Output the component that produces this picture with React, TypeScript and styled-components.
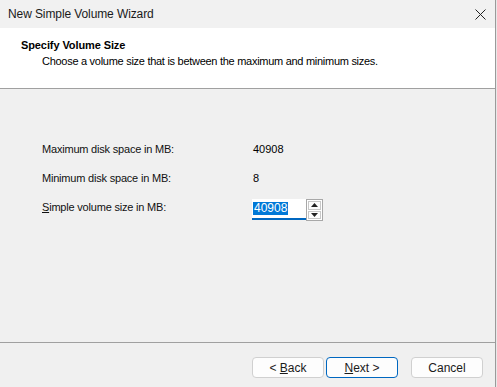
import React from "react";
import styled, { createGlobalStyle } from "styled-components";

const Global = createGlobalStyle`
  html, body { margin: 0; padding: 0; background: #f0f0f0; }
  body { font-family: "Liberation Sans", Arial, sans-serif; font-size: 11px; color: #000; }
  * { box-sizing: border-box; }
`;

const Frame = styled.div`
  display: flex;
  width: 497px;
  height: 387px;
  overflow: hidden;
`;

const Window = styled.div`
  width: 496px;
  height: 387px;
  display: flex;
  flex-direction: column;
  background: #f0f0f0;
  border-right: 1px solid #9a9a9a;
`;

const Edge = styled.div`
  width: 1px;
  background: #e8e8e8;
`;

const TitleBar = styled.div`
  height: 28px;
  flex: none;
  display: flex;
  align-items: center;
  justify-content: space-between;
  padding: 0 9px 0 8px;
  background: #f1f1f1;
  font-size: 12px;
  letter-spacing: -0.1px;
  color: #1a1a1a;
`;

const CloseIcon = styled.svg`
  width: 11px;
  height: 11px;
`;

const Header = styled.div`
  height: 61px;
  flex: none;
  background: #fff;
  border-bottom: 1px solid #a0a0a0;
  padding: 11px 0 0 21px;
  display: flex;
  flex-direction: column;
  letter-spacing: -0.28px;
`;

const HeaderTitle = styled.div`
  font-weight: bold;
  font-size: 11px;
  line-height: 13px;
  letter-spacing: -0.1px;
`;

const HeaderSub = styled.div`
  margin-top: 3px;
  padding-left: 21px;
  line-height: 13px;
`;

const Content = styled.div`
  flex: 1;
  padding: 51px 0 0 42px;
  display: flex;
  flex-direction: column;
  letter-spacing: -0.2px;
`;

const Row = styled.div`
  height: 29px;
  display: flex;
  align-items: flex-start;
  padding-top: 3px;
`;

const Label = styled.div`
  width: 210px;
  line-height: 13px;
  color: #111;
`;

const Value = styled.div`
  line-height: 13px;
  padding-left: 1px;
  letter-spacing: 0;
`;

const SpinRow = styled.div`
  height: 29px;
  display: flex;
  align-items: flex-start;
  margin-top: 1px;
`;

const SpinLabel = styled(Label)`
  padding-top: 2px;
`;

const InputBox = styled.div`
  width: 54px;
  height: 21px;
  background: #fff;
  border-bottom: 2px solid #0067c0;
  display: flex;
  align-items: center;
  padding-left: 1px;
  letter-spacing: 0;
`;

const Selected = styled.span`
  background: #0078d7;
  color: #fff;
  line-height: 13px;
  padding: 0 1px;
  font-size: 12px;
`;

const Spinner = styled.div`
  width: 17px;
  height: 22px;
  border: 1px solid #a8a8a8;
  display: flex;
  flex-direction: column;
  gap: 1px;
  padding: 1px;
  background: #fff;
`;

const SpinBtn = styled.div`
  flex: 1;
  border: 1px solid #c8c8c8;
  background: #fdfdfd;
  display: flex;
  align-items: center;
  justify-content: center;
`;

const Footer = styled.div`
  height: 45px;
  flex: none;
  border-top: 1px solid #a0a0a0;
  display: flex;
  align-items: flex-start;
  justify-content: flex-end;
  padding: 14px 12px 0 0;
`;

const Btn = styled.div<{ $primary?: boolean; $gap?: number }>`
  width: 72px;
  height: 21px;
  margin-left: ${(p) => p.$gap ?? 0}px;
  border: 1px solid ${(p) => (p.$primary ? "#0067c0" : "#d0d0d0")};
  border-radius: 4px;
  background: #fdfdfd;
  display: flex;
  align-items: center;
  justify-content: center;
  color: #1a1a1a;
  font-size: 12px;
  white-space: pre;
`;

const U = styled.span`
  text-decoration: underline;
`;

export default function App() {
  return (
    <>
      <Global />
      <Frame>
        <Window>
          <TitleBar>
            <span>New Simple Volume Wizard</span>
            <CloseIcon viewBox="0 0 11 11">
              <path d="M0.5 0.5 L10.5 10.5 M10.5 0.5 L0.5 10.5" stroke="#222" strokeWidth="1" fill="none" />
            </CloseIcon>
          </TitleBar>
          <Header>
            <HeaderTitle>Specify Volume Size</HeaderTitle>
            <HeaderSub>Choose a volume size that is between the maximum and minimum sizes.</HeaderSub>
          </Header>
          <Content>
            <Row>
              <Label>Maximum disk space in MB:</Label>
              <Value>40908</Value>
            </Row>
            <Row>
              <Label>Minimum disk space in MB:</Label>
              <Value>8</Value>
            </Row>
            <SpinRow>
              <SpinLabel>
                <U>S</U>imple volume size in MB:
              </SpinLabel>
              <InputBox>
                <Selected>40908</Selected>
              </InputBox>
              <Spinner>
                <SpinBtn>
                  <svg width="7" height="4" viewBox="0 0 7 4">
                    <path d="M3.5 0 L7 4 L0 4 Z" fill="#222" />
                  </svg>
                </SpinBtn>
                <SpinBtn>
                  <svg width="7" height="4" viewBox="0 0 7 4">
                    <path d="M0 0 L7 0 L3.5 4 Z" fill="#222" />
                  </svg>
                </SpinBtn>
              </Spinner>
            </SpinRow>
          </Content>
          <Footer>
            <Btn>
              {"< "}
              <U>B</U>
              {"ack"}
            </Btn>
            <Btn $primary $gap={2}>
              <U>N</U>
              {"ext >"}
            </Btn>
            <Btn $gap={13}>Cancel</Btn>
          </Footer>
        </Window>
        <Edge />
      </Frame>
    </>
  );
}
